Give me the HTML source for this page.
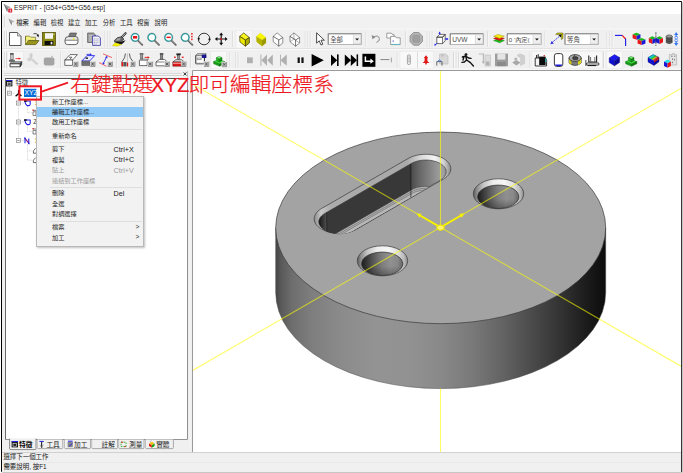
<!DOCTYPE html>
<html lang="zh-Hant">
<head>
<meta charset="utf-8">
<title>ESPRIT - [G54+G55+G56.esp]</title>
<style>
html,body{margin:0;padding:0;}
body{width:683px;height:473px;background:#fff;position:relative;overflow:hidden;
 font-family:"Liberation Sans","Noto Sans CJK TC",sans-serif;color:#000;}
.abs{position:absolute;}
#frame{position:absolute;left:1px;top:1px;width:679px;height:469px;border:1px solid #000;border-right-color:#333;border-bottom-color:#333;border-radius:1px;box-shadow:1px 1px 0 #c6c6c6;background:#fff;overflow:hidden;}
#win{position:absolute;left:0;top:0;width:683px;height:473px;}
.t{position:absolute;white-space:nowrap;line-height:1;}
#title{left:13.8px;top:4.2px;font-size:7.7px;color:#222;transform-origin:0 0;transform:scaleX(0.86);}
#menubar{left:2px;top:14px;width:679px;height:15px;background:#f1f1f1;}
.mi{position:absolute;top:19.6px;font-size:6.3px;color:#222;white-space:nowrap;line-height:1;}
#tb{left:2px;top:29px;width:679px;height:42px;background:#f0f0f0;}
#panelbg{left:2px;top:71px;width:191px;height:382px;background:#f0f0f0;}
#tree{left:5px;top:78px;width:181.4px;height:359.6px;background:#fff;border:1px solid #6a6a6a;border-top-color:#505050;}
#status{left:2px;top:452px;width:679px;height:19px;background:#f0f0f0;border-top:1px solid #d0d0d0;}
.st{position:absolute;left:3.4px;font-size:6.45px;color:#222;white-space:nowrap;line-height:1;}
#ctx{left:36px;top:95.6px;width:106.4px;height:149.4px;background:#f2f2f2;border:0.8px solid #b8b8b8;box-shadow:1px 1px 2px rgba(0,0,0,.25);}
.cm{position:absolute;left:15px;font-size:6.2px;color:#262626;white-space:nowrap;line-height:1;}
.cm.d{color:#9a9a9a;}
.sc{position:absolute;left:76.6px;font-size:7.2px;color:#1a1a1a;white-space:nowrap;line-height:1;}
.sc.d{color:#9a9a9a;}
.sep{position:absolute;left:13.4px;width:92px;height:0;border-top:0.8px solid #dedede;}
.tab{position:absolute;top:439px;height:10px;font-size:6.8px;line-height:10px;color:#222;white-space:nowrap;}
.note{top:75.3px;font-size:20.8px;color:#ee1620;font-weight:300;-webkit-text-stroke:0.22px #ee1620;}
</style>
</head>
<body>
<div id="frame"></div>
<div id="win">
<!-- title -->
<svg class="abs" style="left:3px;top:3px" width="11" height="11" viewBox="0 0 11 11">
 <path d="M0.6 0.8 L7.8 4.2 L4.9 5.6 L4.2 9 Z" fill="#a8a8a8"/>
 <path d="M0.6 0.8 L4.9 5.6 L4.2 9 Z" fill="#7a7a7a"/>
 <rect x="5.2" y="5.6" width="4" height="4" rx="0.6" fill="#d8283c"/>
 <rect x="6.9" y="6.6" width="0.8" height="2" fill="#fff"/>
</svg>
<div class="t" id="title">ESPRIT - [G54+G55+G56.esp]</div>

<!-- menubar -->
<div class="abs" id="menubar"></div>
<svg class="abs" style="left:7.6px;top:18.4px" width="8" height="8" viewBox="0 0 8 8">
 <path d="M0.5 0.6 L6.6 3.4 L4 4.4 L3.4 7.2 Z" fill="#b4b4b4"/>
 <path d="M0.5 0.6 L4 4.4 L3.4 7.2 Z" fill="#8a8a8a"/>
</svg>
<div class="mi" style="left:16.2px">檔案</div>
<div class="mi" style="left:33.6px">編輯</div>
<div class="mi" style="left:50.8px">檢視</div>
<div class="mi" style="left:67.9px">建立</div>
<div class="mi" style="left:85px">加工</div>
<div class="mi" style="left:102.7px">分析</div>
<div class="mi" style="left:119.9px">工具</div>
<div class="mi" style="left:136.9px">視窗</div>
<div class="mi" style="left:154.6px">說明</div>

<!-- toolbars -->
<div class="abs" id="tb"></div>
<svg class="abs" style="left:0;top:0" width="683" height="473" viewBox="0 0 683 473">
<rect x="2" y="28.6" width="679" height="0.8" fill="#fbfbfb"/>
<rect x="2" y="49" width="679" height="0.9" fill="#fafafa"/>
<rect x="2" y="48.2" width="679" height="0.8" fill="#e0e0e0"/>
<rect x="2" y="68.6" width="679" height="0.9" fill="#fcfcfc"/>
<rect x="4.4" y="16.4" width="0.8" height="10.6" fill="#cdcdcd"/><rect x="5.2" y="16.4" width="0.7" height="10.6" fill="#fcfcfc"/>
<rect x="4" y="31" width="0.8" height="16" fill="#cfcfcf"/><rect x="4.8" y="31" width="0.7" height="16" fill="#fdfdfd"/>
<rect x="6.2" y="31" width="0.8" height="16" fill="#cfcfcf"/><rect x="7" y="31" width="0.7" height="16" fill="#fdfdfd"/>
<g transform="translate(9 32)"><path d="M0.5 0.5 H8.5 L12 4 V13.5 H0.5 Z" fill="#fff" stroke="#444" stroke-width="0.9"/><path d="M8.5 0.5 V4 H12" fill="#e0e0e0" stroke="#666" stroke-width="0.7"/></g>
<g transform="translate(25 32)"><path d="M0.5 4.2 H4.6 L5.6 5.2 H10.6 V8.4 H0.5 Z" fill="#f6f282" stroke="#6a681a" stroke-width="0.7"/><path d="M0.5 12.6 L0.5 8 L3 8.4 H13.8 L10.6 12.6 Z" fill="#f6f282" stroke="none"/><path d="M0.5 12.6 L3.6 8.6 H14 L10.8 12.6 Z" fill="#9a961c" stroke="#4a4a10" stroke-width="0.7"/><path d="M0.5 4.2 V12.6" stroke="#6a681a" stroke-width="0.7"/><path d="M8.5 1.8 Q11.5 0.5 13 3.2" fill="none" stroke="#222" stroke-width="0.8"/><path d="M11.5 3 L14 2.6 L13.4 5.4 Z" fill="#111"/></g>
<g transform="translate(42 32)"><rect x="0.5" y="0.5" width="13" height="13" fill="#8a8612" stroke="#55520c" stroke-width="0.8"/><rect x="3" y="1.2" width="8" height="5.6" fill="#f4f4f4"/><rect x="2.6" y="9" width="8.8" height="4" fill="#0c0c0c"/><rect x="8.6" y="9.8" width="1.8" height="2.6" fill="#e8e8e8"/><rect x="11.3" y="1.6" width="1.2" height="1.4" fill="#d8d6a0"/></g>
<rect x="59.6" y="31" width="0.8" height="16" fill="#d4d4d4"/><rect x="60.4" y="31" width="0.7" height="16" fill="#fbfbfb"/>
<g transform="translate(64 32)"><path d="M4.5 4.5 L6 1 H12.5 L11.4 4.5 Z" fill="#7a7a7a" stroke="#444" stroke-width="0.6"/><path d="M1 8 Q1 4.6 4.5 4.6 H11.5 Q14 4.6 14 7 V10 Q14 12.6 11 12.6 H3.5 Q1 12.6 1 10 Z" fill="#e8e8e8" stroke="#444" stroke-width="0.8"/><path d="M1.4 8.2 H13.6" stroke="#555" stroke-width="0.7"/><rect x="8.8" y="6.3" width="1.6" height="1.4" fill="#f0e800"/><path d="M2 9 H12.5 V11 Q12 12 10.5 12 H4 Q2 12 2 10.6Z" fill="#fff"/></g>
<rect x="82.6" y="31" width="0.8" height="16" fill="#d4d4d4"/><rect x="83.4" y="31" width="0.7" height="16" fill="#fbfbfb"/>
<g transform="translate(87 32)"><path d="M0.6 1 H6.5 L8.4 2.8 V10.5 H0.6 Z" fill="#9c9c9c" stroke="#555" stroke-width="0.7"/><path d="M1.8 3.4 H7 M1.8 5.2 H7 M1.8 7 H5 M1.8 8.8 H5" stroke="#d8d8d8" stroke-width="0.7"/><path d="M5.6 4 H11.4 L13.4 6 V13.4 H5.6 Z" fill="#f2f2fa" stroke="#2c2ca0" stroke-width="0.8"/><path d="M6.8 7 H12.2 M6.8 8.8 H12.2 M6.8 10.6 H12.2 M6.8 12 H10" stroke="#8c8cb4" stroke-width="0.7" stroke-dasharray="1.2 0.5"/></g>
<rect x="104.6" y="31" width="0.8" height="16" fill="#d4d4d4"/><rect x="105.4" y="31" width="0.7" height="16" fill="#fbfbfb"/>
<rect x="107.6" y="31" width="0.8" height="16" fill="#cfcfcf"/><rect x="108.39999999999999" y="31" width="0.7" height="16" fill="#fdfdfd"/>
<rect x="109.8" y="31" width="0.8" height="16" fill="#cfcfcf"/><rect x="110.6" y="31" width="0.7" height="16" fill="#fdfdfd"/>
<g transform="translate(112 32)"><path d="M13.6 1.2 L9 6" stroke="#3a3a3a" stroke-width="2.2" stroke-linecap="round"/><path d="M13.4 1.4 L9.2 5.8" stroke="#b0b0b0" stroke-width="1"/><path d="M5.6 5.6 L9.6 4.8 L12 7.2 L8.6 9.8 L2.6 10 L2.4 8.4 Z" fill="#6a6a6a" stroke="#1a1a1a" stroke-width="0.6" stroke-linejoin="round"/><path d="M5.4 6.4 L8.8 5.8 L7.4 8.6 L3.4 8.8 Z" fill="#a4a4a4"/><path d="M2.6 10 L8.6 9.8 L13.6 8.2 L11.6 10.8 L9.2 12.4 L5.4 11.4 Z" fill="#161616"/><path d="M0.4 13.8 L3 10.8 L6 11.6 L9.6 12.6 L5.4 14.2 Z" fill="#f4f000" stroke="#a09c00" stroke-width="0.3"/></g>
<g transform="translate(130.5 32)"><circle cx="4.6" cy="5.4" r="3.7" fill="#fff" stroke="#28a8ac" stroke-width="1.2"/><circle cx="4.6" cy="5.4" r="4.3" fill="none" stroke="#3a3a3a" stroke-width="0.3"/><rect x="2.5" y="4" width="4.2" height="2.6" fill="#e8141c"/><path d="M7.8 8.8 L11.8 12.8" stroke="#606060" stroke-width="1.8" stroke-linecap="round"/><path d="M8 8.6 L11.6 12.2" stroke="#c0c0c0" stroke-width="0.6"/></g>
<g transform="translate(147.2 32)"><circle cx="4.6" cy="5.4" r="3.7" fill="#fff" stroke="#28a8ac" stroke-width="1.2"/><circle cx="4.6" cy="5.4" r="4.3" fill="none" stroke="#3a3a3a" stroke-width="0.3"/><path d="M7.8 8.8 L11.8 12.8" stroke="#606060" stroke-width="1.8" stroke-linecap="round"/><path d="M8 8.6 L11.6 12.2" stroke="#c0c0c0" stroke-width="0.6"/></g>
<g transform="translate(164 32)"><circle cx="4.6" cy="5.4" r="3.7" fill="#fff" stroke="#28a8ac" stroke-width="1.2"/><circle cx="4.6" cy="5.4" r="4.3" fill="none" stroke="#3a3a3a" stroke-width="0.3"/><rect x="2.5" y="4.6" width="4.2" height="1.5" fill="#e8141c"/><path d="M7.8 8.8 L11.8 12.8" stroke="#606060" stroke-width="1.8" stroke-linecap="round"/><path d="M8 8.6 L11.6 12.2" stroke="#c0c0c0" stroke-width="0.6"/></g>
<g transform="translate(180.6 32)"><circle cx="4.6" cy="5.4" r="3.7" fill="#fff" stroke="#28a8ac" stroke-width="1.2"/><circle cx="4.6" cy="5.4" r="4.3" fill="none" stroke="#3a3a3a" stroke-width="0.3"/><rect x="10.6" y="1" width="1.4" height="1.6" fill="#e8141c"/><rect x="10.6" y="3.8" width="1.4" height="1.6" fill="#e8141c"/><rect x="10.6" y="6.6" width="1.4" height="1.6" fill="#e8141c"/><path d="M7.8 8.8 L11.8 12.8" stroke="#606060" stroke-width="1.8" stroke-linecap="round"/><path d="M8 8.6 L11.6 12.2" stroke="#c0c0c0" stroke-width="0.6"/></g>
<g transform="translate(197.5 32)"><circle cx="6.6" cy="7" r="5.8" fill="none" stroke="#222" stroke-width="0.9"/><path d="M0 6.2 L1.6 8.6 L2.4 5.8 Z M13.2 7.8 L11.6 5.4 L10.8 8.2 Z" fill="#111"/></g>
<g transform="translate(215 32)"><path d="M6.2 2 V12 M1.2 7 H11.2" stroke="#111" stroke-width="1.2"/><path d="M6.2 0.6 L8.2 3.2 H4.2 Z M6.2 13.4 L8.2 10.8 H4.2 Z M-0.2 7 L2.4 5 V9 Z M12.6 7 L10 5 V9 Z" fill="#111"/><rect x="5.4" y="6.2" width="1.6" height="1.6" fill="#e8141c"/></g>
<rect x="232.0" y="31" width="0.8" height="16" fill="#d4d4d4"/><rect x="232.8" y="31" width="0.7" height="16" fill="#fbfbfb"/>
<rect x="236" y="30.5" width="16" height="17.6" fill="#f8f8f8" stroke="#e6e6e6" stroke-width="0.5"/>
<g transform="translate(239.4 32)"><path d="M4.3 0.9 L10 5.6 L6 8 L0.3 4.4 Z" fill="#f8f420" stroke="#3c3a00" stroke-width="0.7" stroke-linejoin="round"/><path d="M0.3 4.4 L6 8 V14.2 L0.5 9.8 Z" fill="#eeea00" stroke="#3c3a00" stroke-width="0.7" stroke-linejoin="round"/><path d="M10 5.6 L6 8 V14.2 L10 11 Z" fill="#b0ac00" stroke="#3c3a00" stroke-width="0.7" stroke-linejoin="round"/></g>
<g transform="translate(256 32)"><path d="M4.3 0.9 L10 5.6 L6 8 L0.3 4.4 Z" fill="#faf600" stroke="#c8c400" stroke-width="0.2" stroke-linejoin="round"/><path d="M0.3 4.4 L6 8 V14.2 L0.5 9.8 Z" fill="#b4b000" stroke="#c8c400" stroke-width="0.2" stroke-linejoin="round"/><path d="M10 5.6 L6 8 V14.2 L10 11 Z" fill="#9c9800" stroke="#c8c400" stroke-width="0.2" stroke-linejoin="round"/></g>
<g transform="translate(272.8 32)"><path d="M4.3 0.9 L10 5.6 L6 8 L0.3 4.4 Z" fill="#fff" stroke="#3a3a3a" stroke-width="0.55" stroke-linejoin="round"/><path d="M0.3 4.4 L6 8 V14.2 L0.5 9.8 Z" fill="#fff" stroke="#3a3a3a" stroke-width="0.55" stroke-linejoin="round"/><path d="M10 5.6 L6 8 V14.2 L10 11 Z" fill="#fff" stroke="#3a3a3a" stroke-width="0.55" stroke-linejoin="round"/></g>
<g transform="translate(289.6 32)"><path d="M4.3 0.9 L10 5.6 L6 8 L0.3 4.4 Z" fill="#fff" stroke="#3a3a3a" stroke-width="0.55" stroke-linejoin="round"/><path d="M0.3 4.4 L6 8 V14.2 L0.5 9.8 Z" fill="#fff" stroke="#3a3a3a" stroke-width="0.55" stroke-linejoin="round"/><path d="M10 5.6 L6 8 V14.2 L10 11 Z" fill="#fff" stroke="#3a3a3a" stroke-width="0.55" stroke-linejoin="round"/><path d="M4.3 0.9 V7 L0.5 9.8 M4.3 7 L10 11" fill="none" stroke="#555" stroke-width="0.45"/></g>
<rect x="304.8" y="31" width="0.8" height="16" fill="#d4d4d4"/><rect x="305.59999999999997" y="31" width="0.7" height="16" fill="#fbfbfb"/>
<rect x="307.6" y="31" width="0.8" height="16" fill="#cfcfcf"/><rect x="308.40000000000003" y="31" width="0.7" height="16" fill="#fdfdfd"/>
<rect x="309.8" y="31" width="0.8" height="16" fill="#cfcfcf"/><rect x="310.6" y="31" width="0.7" height="16" fill="#fdfdfd"/>
<g transform="translate(316 32)"><path d="M0.6 0.8 V11.2 L3.2 8.8 L5 13 L6.8 12.2 L5 8.2 H8.4 Z" fill="#fff" stroke="#222" stroke-width="0.8" stroke-linejoin="round"/></g>
<rect x="328.2" y="33.8" width="33.19999999999999" height="10.800000000000004" fill="#fff" stroke="#9a9a9a" stroke-width="0.7"/>
<path d="M328.2 44.6 V33.8 H361.4" fill="none" stroke="#6a6a6a" stroke-width="0.7"/>
<rect x="353.2" y="34.599999999999994" width="7.6" height="9.200000000000005" fill="#efefef" stroke="#c8c8c8" stroke-width="0.5"/>
<path d="M355.2 38.4 H359.0 L357.09999999999997 40.599999999999994 Z" fill="#111"/>
<text x="330.2" y="41.699999999999996" font-size="6.4" fill="#4a4a4a" font-family="Liberation Sans, Noto Sans CJK TC, sans-serif">全部</text>
<rect x="365.6" y="31" width="0.8" height="16" fill="#d4d4d4"/><rect x="366.4" y="31" width="0.7" height="16" fill="#fbfbfb"/>
<g transform="translate(371 32)"><path d="M2 5.4 Q7.6 2.2 8.4 6.6 Q8.6 9.6 5.4 10.4" fill="none" stroke="#8a8a8a" stroke-width="1"/><path d="M0.6 3 L1.4 7.2 L4.6 5 Z" fill="#8a8a8a"/></g>
<g transform="translate(386 32)"><path d="M0.8 1.2 H5.6 L6.4 2.6 H8 V6 H0.8 Z" fill="#fff" stroke="#777" stroke-width="0.7"/><path d="M4.6 4.4 H9.6 L10.4 5.8 H14.2 V12.6 H4.6 Z" fill="#fff" stroke="#777" stroke-width="0.7"/><path d="M5.2 12.4 H14" stroke="#4cc0c8" stroke-width="0.8"/><rect x="6.6" y="8.6" width="1.2" height="1" fill="#3030d0"/></g>
<rect x="405.0" y="31" width="0.8" height="16" fill="#d4d4d4"/><rect x="405.79999999999995" y="31" width="0.7" height="16" fill="#fbfbfb"/>
<g transform="translate(409.6 32)"><path d="M4 0.5 H9.2 L12.8 4 V9.6 L9.2 13.2 H4 L0.5 9.6 V4 Z" fill="#b4b4b4" stroke="#8c8c8c" stroke-width="0.9"/><rect x="3.2" y="3.4" width="6.8" height="6.8" rx="1.2" fill="#a0a0a0" stroke="#8a8a8a" stroke-width="0.5"/></g>
<rect x="426.8" y="31" width="0.8" height="16" fill="#d4d4d4"/><rect x="427.59999999999997" y="31" width="0.7" height="16" fill="#fbfbfb"/>
<rect x="429.6" y="31" width="0.8" height="16" fill="#cfcfcf"/><rect x="430.40000000000003" y="31" width="0.7" height="16" fill="#fdfdfd"/>
<rect x="431.8" y="31" width="0.8" height="16" fill="#cfcfcf"/><rect x="432.6" y="31" width="0.7" height="16" fill="#fdfdfd"/>
<g transform="translate(434.2 32)"><path d="M2.6 5.2 L5.6 2.4 H11 L8.4 5.2 Z M2.6 5.2 H8.4 V11.6 H2.6 Z M8.4 5.2 L11 2.4 V8.8 L8.4 11.6" fill="#fff" stroke="#333" stroke-width="0.7" stroke-linejoin="round"/><path d="M5.4 2.6 V0.6 M10.6 7 H13.6 M3 11 L0.8 13" stroke="#2020e8" stroke-width="0.9"/><path d="M5.4 -0.6 L6.6 1.8 H4.2 Z M14.4 7 L12.2 5.8 V8.2 Z M0 13.8 L0.6 11.4 L2.4 13 Z" fill="#2020e8"/></g>
<rect x="450.2" y="33.8" width="33.19999999999999" height="10.800000000000004" fill="#fff" stroke="#9a9a9a" stroke-width="0.7"/>
<path d="M450.2 44.6 V33.8 H483.4" fill="none" stroke="#6a6a6a" stroke-width="0.7"/>
<rect x="475.2" y="34.599999999999994" width="7.6" height="9.200000000000005" fill="#efefef" stroke="#c8c8c8" stroke-width="0.5"/>
<path d="M477.2 38.4 H481.0 L479.09999999999997 40.599999999999994 Z" fill="#111"/>
<text x="452.2" y="41.699999999999996" font-size="6.6" fill="#4a4a4a" font-family="Liberation Sans, Noto Sans CJK TC, sans-serif">UVW</text>
<rect x="487.0" y="31" width="0.8" height="16" fill="#d4d4d4"/><rect x="487.79999999999995" y="31" width="0.7" height="16" fill="#fbfbfb"/>
<g transform="translate(493 32)"><path d="M0.6 8.6 L5 6.8 L11.4 8.6 L6.6 10.8 Z" fill="#18c018" stroke="#0a7a0a" stroke-width="0.4"/><path d="M0.6 6.4 L5 4.6 L11.4 6.4 L6.6 8.6 Z" fill="#e81818" stroke="#8a0a0a" stroke-width="0.4"/><path d="M0.6 4.2 L5 2.4 L11.4 4.2 L6.6 6.4 Z" fill="#f4ec10" stroke="#8a8400" stroke-width="0.4"/></g>
<rect x="507.2" y="33.8" width="34.00000000000006" height="10.800000000000004" fill="#fff" stroke="#9a9a9a" stroke-width="0.7"/>
<path d="M507.2 44.6 V33.8 H541.2" fill="none" stroke="#6a6a6a" stroke-width="0.7"/>
<rect x="533.0" y="34.599999999999994" width="7.6" height="9.200000000000005" fill="#efefef" stroke="#c8c8c8" stroke-width="0.5"/>
<path d="M535.0 38.4 H538.8 L536.9 40.599999999999994 Z" fill="#111"/>
<text x="508.8" y="41.699999999999996" font-size="6.2" fill="#4a4a4a" font-family="Liberation Sans, Noto Sans CJK TC, sans-serif">0 '內定(</text>
<rect x="544.6" y="31" width="0.8" height="16" fill="#d4d4d4"/><rect x="545.4" y="31" width="0.7" height="16" fill="#fbfbfb"/>
<g transform="translate(550 32)"><path d="M7 1 H13 V6.4 L11.4 7.6 V2.6 H5.8 Z" fill="#c8c400" stroke="#55520c" stroke-width="0.5"/><path d="M11 3 L2 10.6" stroke="#2828e0" stroke-width="0.9" stroke-dasharray="1.6 0.8"/><path d="M0.4 12.2 L1.6 9 L3.8 11.4 Z" fill="#2828e0"/><path d="M11.6 2.4 L8.4 3 L10.8 5.4 Z" fill="#111"/></g>
<rect x="565" y="33.8" width="33.39999999999998" height="10.800000000000004" fill="#fff" stroke="#9a9a9a" stroke-width="0.7"/>
<path d="M565 44.6 V33.8 H598.4" fill="none" stroke="#6a6a6a" stroke-width="0.7"/>
<rect x="590.1999999999999" y="34.599999999999994" width="7.6" height="9.200000000000005" fill="#efefef" stroke="#c8c8c8" stroke-width="0.5"/>
<path d="M592.1999999999999 38.4 H595.9999999999999 L594.0999999999999 40.599999999999994 Z" fill="#111"/>
<text x="567" y="41.699999999999996" font-size="6.4" fill="#4a4a4a" font-family="Liberation Sans, Noto Sans CJK TC, sans-serif">等角</text>
<rect x="606.6" y="31" width="0.8" height="16" fill="#d4d4d4"/><rect x="607.4" y="31" width="0.7" height="16" fill="#fbfbfb"/>
<rect x="609.6" y="31" width="0.8" height="16" fill="#cfcfcf"/><rect x="610.4" y="31" width="0.7" height="16" fill="#fdfdfd"/>
<rect x="611.8000000000001" y="31" width="0.8" height="16" fill="#cfcfcf"/><rect x="612.6" y="31" width="0.7" height="16" fill="#fdfdfd"/>
<g transform="translate(614.4 32)"><path d="M0.6 3.4 H8.2" stroke="#1818e8" stroke-width="1.1"/><path d="M7.8 3.4 L11.2 7" fill="none" stroke="#e81818" stroke-width="1.2"/><path d="M11.2 6.6 V14" stroke="#1818e8" stroke-width="1.1"/></g>
<g transform="translate(632.6 32)"><g transform="translate(0 0.8) scale(1.45 1.1)"><path d="M0 1.4 L2.6 0 L5.4 1.4 L2.8 2.8 Z" fill="#18b818"/><path d="M0 1.4 L2.8 2.8 V6.4 L0 5 Z" fill="#e81818"/><path d="M5.4 1.4 L2.8 2.8 V6.4 L5.4 5 Z" fill="#1818d8"/></g><g transform="translate(5 6) scale(1.45 1.1)"><path d="M0 1.4 L2.6 0 L5.4 1.4 L2.8 2.8 Z" fill="#18b818"/><path d="M0 1.4 L2.8 2.8 V6.4 L0 5 Z" fill="#e81818"/><path d="M5.4 1.4 L2.8 2.8 V6.4 L5.4 5 Z" fill="#1818d8"/></g></g>
<g transform="translate(648.8 32)"><g transform="translate(0 4.2) scale(1.3 1.2)"><path d="M0 1.4 L2.6 0 L5.4 1.4 L2.8 2.8 Z" fill="#18b818"/><path d="M0 1.4 L2.8 2.8 V6.4 L0 5 Z" fill="#e81818"/><path d="M5.4 1.4 L2.8 2.8 V6.4 L5.4 5 Z" fill="#1818d8"/></g><g transform="translate(7.2 4.2) scale(1.3 1.2)"><path d="M0 1.4 L2.6 0 L5.4 1.4 L2.8 2.8 Z" fill="#18b818"/><path d="M0 1.4 L2.8 2.8 V6.4 L0 5 Z" fill="#1818d8"/><path d="M5.4 1.4 L2.8 2.8 V6.4 L5.4 5 Z" fill="#e81818"/></g><path d="M7.1 0.2 V14" stroke="#222" stroke-width="0.7" stroke-dasharray="2.4 0.8"/></g>
<g transform="translate(665.6 32)"><path d="M0.6 4.4 V10.6 Q3.6 12.8 6.6 10.6 V4.4 Z" fill="#5a5a5a" stroke="#222" stroke-width="0.5"/><ellipse cx="3.6" cy="4.4" rx="3" ry="1.5" fill="#9a9a9a" stroke="#222" stroke-width="0.5"/><path d="M0.8 6.6 Q3.6 8.4 6.4 6.6 M0.8 8.6 Q3.6 10.4 6.4 8.6" fill="none" stroke="#222" stroke-width="0.4"/><path d="M10.6 0.8 V5 M10.6 9 V13.2" stroke="#3a78f0" stroke-width="1.1"/><path d="M8.4 3 L10.6 0.2 L12.8 3 Z M8.4 11 L10.6 13.8 L12.8 11 Z" fill="#3a78f0"/><circle cx="10.6" cy="5.6" r="1.4" fill="none" stroke="#3a78f0" stroke-width="0.7"/><circle cx="10.6" cy="8.6" r="1.4" fill="none" stroke="#3a78f0" stroke-width="0.7"/></g>
<rect x="4" y="52" width="0.8" height="16" fill="#cfcfcf"/><rect x="4.8" y="52" width="0.7" height="16" fill="#fdfdfd"/>
<rect x="6.2" y="52" width="0.8" height="16" fill="#cfcfcf"/><rect x="7" y="52" width="0.7" height="16" fill="#fdfdfd"/>
<rect x="7.2" y="51.2" width="16.0" height="17.6" fill="#f8f8f8" stroke="#e6e6e6" stroke-width="0.5"/>
<g transform="translate(9 53)"><rect x="1.6" y="0.6" width="2.6" height="6" fill="#c4c4c4" stroke="#555" stroke-width="0.5"/><rect x="1.4" y="0.4" width="3" height="1.2" fill="#333"/><path d="M0.4 7 H5.4 V8.4 H0.4 Z" fill="#8a8a8a" stroke="#222" stroke-width="0.5"/><path d="M1 10.8 L2.4 8.6 H12.8 L11.2 10.8 Z" fill="#a0a0a0" stroke="#333" stroke-width="0.4"/><path d="M1 10.8 H11.2 V13.8 H1 Z" fill="#fff" stroke="#1a1a1a" stroke-width="0.8"/><path d="M11.2 10.8 L12.8 8.6 V11.8 L11.2 13.8 Z" fill="#444" stroke="#1a1a1a" stroke-width="0.5"/><path d="M6.4 5.6 H10" stroke="#f02020" stroke-width="0.8"/><path d="M12 5.6 L9.6 4.4 V6.8 Z" fill="#f02020"/></g>
<g transform="translate(26 53)"><path d="M3.6 0.4 H6.4 V4 L5 5.2 L3.6 4 Z" fill="#c6c6c6"/><path d="M4.6 0.6 V4" stroke="#e8e8e8" stroke-width="0.6"/><path d="M3.2 4.2 L0.6 6.6 L3 8.6 L5.4 7.4 L10.4 12 L12.6 10.8 L6.6 5.6 Z" fill="#d2d2d2"/></g>
<g transform="translate(43 53)"><rect x="0.8" y="4.4" width="10.6" height="8" rx="2" fill="#a4a4a4"/><path d="M7.6 4.4 L9 2.6 L10.4 4.4" fill="#b8b8b8"/></g>
<rect x="60.0" y="52" width="0.8" height="16" fill="#d4d4d4"/><rect x="60.8" y="52" width="0.7" height="16" fill="#fbfbfb"/>
<g transform="translate(64 53)"><path d="M0.8 7 L6 1.6 H13.4 L8.6 7 Z" fill="#fff" stroke="#333" stroke-width="0.7" stroke-linejoin="round"/><path d="M0.8 7 H8.6 V12.4 H0.8 Z" fill="#fff" stroke="#333" stroke-width="0.7"/><path d="M5 4.2 H8 L7 5.4 H6" fill="none" stroke="#333" stroke-width="0.7"/><rect x="9.2" y="8.6" width="4.8" height="4.8" fill="#b8b8b8" stroke="#e8e8e8" stroke-width="0.5"/><path d="M10.4 9.8 L12.8 12.2 M12.8 9.8 L10.4 12.2" stroke="#333" stroke-width="0.7"/><path d="M9.2 13.4 H14 V8.6" fill="none" stroke="#555" stroke-width="0.5"/></g>
<g transform="translate(81 53)"><path d="M0.8 8 L6 2.6 H13.6 L8.6 8 Z" fill="#e8ecff" stroke="#2828e8" stroke-width="0.9" stroke-linejoin="round"/><path d="M0.8 8.2 H9 V12.6 H0.8 Z" fill="#7c7c7c" stroke="#444" stroke-width="0.5"/><path d="M0.8 9.6 H9 M0.8 11 H9" stroke="#5a5a5a" stroke-width="0.5"/><path d="M5.4 1.4 H9.6" stroke="#2828e8" stroke-width="0.8"/><path d="M11 1.4 L8.8 0.2 V2.6 Z" fill="#2828e8"/><rect x="4.6" y="4.4" width="2.4" height="1.6" fill="#333"/><rect x="9.2" y="8.6" width="4.8" height="4.8" fill="#b8b8b8" stroke="#e8e8e8" stroke-width="0.5"/><path d="M10.4 9.8 L12.8 12.2 M12.8 9.8 L10.4 12.2" stroke="#333" stroke-width="0.7"/><path d="M9.2 13.4 H14 V8.6" fill="none" stroke="#555" stroke-width="0.5"/></g>
<g transform="translate(98.4 53)"><path d="M4.6 0.8 L13.6 4.6 M0.6 9.6 L8 13.2" stroke="#f04040" stroke-width="0.8"/><path d="M8.2 3.8 L5 10.4" stroke="#2828e8" stroke-width="0.9"/><path d="M8.8 2.6 L6.8 4.6 L9 5.4 Z M4.4 11.8 L4.2 9.2 L6.4 10.2 Z" fill="#2828e8"/><rect x="9.2" y="8.6" width="4.8" height="4.8" fill="#b8b8b8" stroke="#e8e8e8" stroke-width="0.5"/><path d="M10.4 9.8 L12.8 12.2 M12.8 9.8 L10.4 12.2" stroke="#333" stroke-width="0.7"/><path d="M9.2 13.4 H14 V8.6" fill="none" stroke="#555" stroke-width="0.5"/></g>
<rect x="116.39999999999999" y="52" width="0.8" height="16" fill="#d4d4d4"/><rect x="117.2" y="52" width="0.7" height="16" fill="#fbfbfb"/>
<g transform="translate(121 53)"><path d="M4.4 0.6 Q4.4 5 1 8.6 V13.2 M8.4 0.6 Q8.4 5 12 8.6" fill="none" stroke="#333" stroke-width="0.8"/><path d="M6.4 0.4 V13.4" stroke="#9a9a9a" stroke-width="0.5"/><rect x="0.6" y="9" width="1.6" height="4.4" fill="#e81818"/><rect x="5.8" y="9.6" width="1.4" height="3.8" fill="#e81818"/><rect x="2.4" y="9" width="3" height="4.4" fill="#555"/><rect x="9.2" y="8.6" width="4.8" height="4.8" fill="#b8b8b8" stroke="#e8e8e8" stroke-width="0.5"/><path d="M10.4 9.8 L12.8 12.2 M12.8 9.8 L10.4 12.2" stroke="#333" stroke-width="0.7"/><path d="M9.2 13.4 H14 V8.6" fill="none" stroke="#555" stroke-width="0.5"/></g>
<g transform="translate(138.6 53)"><rect x="2" y="0.6" width="2.2" height="5.6" fill="#9a9a9a" stroke="#444" stroke-width="0.5"/><path d="M0.6 1 H5.6" stroke="#555" stroke-width="0.6"/><path d="M0.8 7.4 H8.6 V12.6 H0.8 Z" fill="#fff" stroke="#333" stroke-width="0.7"/><path d="M0.8 7.4 L2 6.2 H10 L8.6 7.4" fill="#ccc" stroke="#333" stroke-width="0.5"/><path d="M6 4.4 H9.6" stroke="#e81818" stroke-width="0.9"/><path d="M11.2 4.4 L9 3.2 V5.6 Z" fill="#e81818"/><rect x="9.2" y="8.6" width="4.8" height="4.8" fill="#b8b8b8" stroke="#e8e8e8" stroke-width="0.5"/><path d="M10.4 9.8 L12.8 12.2 M12.8 9.8 L10.4 12.2" stroke="#333" stroke-width="0.7"/><path d="M9.2 13.4 H14 V8.6" fill="none" stroke="#555" stroke-width="0.5"/></g>
<g transform="translate(155.4 53)"><rect x="5" y="0.4" width="2.4" height="6.6" fill="#8a8a8a" stroke="#333" stroke-width="0.5"/><rect x="4.4" y="0.4" width="3.6" height="1.4" fill="#555"/><path d="M0.6 9 L4 6.4 H9 L12 9 V12.8 H0.6 Z" fill="#fff" stroke="#333" stroke-width="0.7" stroke-linejoin="round"/><path d="M0.6 9 H12" stroke="#333" stroke-width="0.6"/><rect x="9.2" y="8.6" width="4.8" height="4.8" fill="#b8b8b8" stroke="#e8e8e8" stroke-width="0.5"/><path d="M10.4 9.8 L12.8 12.2 M12.8 9.8 L10.4 12.2" stroke="#333" stroke-width="0.7"/><path d="M9.2 13.4 H14 V8.6" fill="none" stroke="#555" stroke-width="0.5"/></g>
<g transform="translate(172 53)"><rect x="4.4" y="0.4" width="4.4" height="1.8" fill="#222"/><rect x="5.6" y="2.2" width="2" height="4.4" fill="#9a9a9a" stroke="#333" stroke-width="0.5"/><path d="M0.8 9 L3.8 6.6 H9.6 L12.4 9 Z" fill="#d8d8d8" stroke="#333" stroke-width="0.6" stroke-linejoin="round"/><path d="M0.8 9 H12.4 V13.2 H0.8 Z" fill="#e01818" stroke="#5a0a0a" stroke-width="0.5"/><path d="M1 10.2 H9" stroke="#fff" stroke-width="0.7"/><rect x="2" y="3.6" width="1.8" height="1.3" fill="#e81818"/><rect x="9.8" y="3.6" width="1.8" height="1.3" fill="#e81818"/><rect x="9.2" y="8.6" width="4.8" height="4.8" fill="#b8b8b8" stroke="#e8e8e8" stroke-width="0.5"/><path d="M10.4 9.8 L12.8 12.2 M12.8 9.8 L10.4 12.2" stroke="#333" stroke-width="0.7"/><path d="M9.2 13.4 H14 V8.6" fill="none" stroke="#555" stroke-width="0.5"/></g>
<rect x="190.0" y="52" width="0.8" height="16" fill="#d4d4d4"/><rect x="190.8" y="52" width="0.7" height="16" fill="#fbfbfb"/>
<g transform="translate(194.8 53)"><path d="M1 2.6 H9.6 V10.6 H1 Z" fill="#fff" stroke="#222" stroke-width="1"/><path d="M1 2.6 L2.6 0.8 H11.4 L9.6 2.6" fill="#ddd" stroke="#222" stroke-width="0.6"/><rect x="7" y="1.6" width="4.6" height="3.4" fill="#18188c"/><path d="M2.4 5 H6.4 V6.6 H2.4Z" fill="none" stroke="#555" stroke-width="0.6"/><path d="M1 10.6 H9" stroke="#888" stroke-width="1.6"/><rect x="9.2" y="8.6" width="4.8" height="4.8" fill="#b8b8b8" stroke="#e8e8e8" stroke-width="0.5"/><path d="M10.4 9.8 L12.8 12.2 M12.8 9.8 L10.4 12.2" stroke="#333" stroke-width="0.7"/><path d="M9.2 13.4 H14 V8.6" fill="none" stroke="#555" stroke-width="0.5"/></g>
<rect x="210.6" y="51.2" width="15.800000000000011" height="17.6" fill="#f8f8f8" stroke="#e6e6e6" stroke-width="0.5"/>
<g transform="translate(213 53)"><path d="M0.6 8.6 L5.8 6.4 L11.8 8.6 L6.6 11 Z" fill="#3cdc3c" stroke="#0a6a0a" stroke-width="0.4"/><path d="M0.6 8.6 L6.6 11 V13.2 L0.6 10.8Z" fill="#18a018" stroke="#0a6a0a" stroke-width="0.4"/><path d="M11.8 8.6 L6.6 11 V13.2 L11.8 10.8Z" fill="#0c7c0c" stroke="#0a5a0a" stroke-width="0.4"/><path d="M3.4 4.6 L6 3.4 L9 4.6 L6.4 6Z" fill="#7cf47c" stroke="#0a6a0a" stroke-width="0.4"/><path d="M3.4 4.6 L6.4 6 V9 L3.4 7.6Z" fill="#20b820" stroke="#0a6a0a" stroke-width="0.4"/><path d="M9 4.6 L6.4 6 V9 L9 7.6Z" fill="#109010" stroke="#0a5a0a" stroke-width="0.4"/><g transform="translate(-0.4 0.4)"><rect x="9.2" y="8.6" width="4.8" height="4.8" fill="#b8b8b8" stroke="#e8e8e8" stroke-width="0.5"/><path d="M10.4 9.8 L12.8 12.2 M12.8 9.8 L10.4 12.2" stroke="#333" stroke-width="0.7"/><path d="M9.2 13.4 H14 V8.6" fill="none" stroke="#555" stroke-width="0.5"/></g></g>
<rect x="229.6" y="52" width="0.8" height="16" fill="#d4d4d4"/><rect x="230.4" y="52" width="0.7" height="16" fill="#fbfbfb"/>
<rect x="235.6" y="52" width="0.8" height="16" fill="#cfcfcf"/><rect x="236.4" y="52" width="0.7" height="16" fill="#fdfdfd"/>
<rect x="237.79999999999998" y="52" width="0.8" height="16" fill="#cfcfcf"/><rect x="238.6" y="52" width="0.7" height="16" fill="#fdfdfd"/>
<rect x="247" y="57.4" width="5.8" height="5.8" fill="#b0b0b0"/>
<path d="M267 54.6 V65.8 L261.4 60.2 Z M272.8 54.6 V65.8 L267.2 60.2 Z" fill="#b0b0b0"/><rect x="260.4" y="54.6" width="1" height="11.2" fill="#b0b0b0"/>
<path d="M286.8 54.6 V65.8 L280.4 60.2 Z" fill="#b0b0b0"/><rect x="280" y="54.6" width="0.9" height="11.2" fill="#b0b0b0"/>
<rect x="297.6" y="57.4" width="2.2" height="5.6" fill="#111"/><rect x="301.4" y="57.4" width="2.2" height="5.6" fill="#111"/>
<path d="M311.6 54 V66.4 L323.8 60.2 Z" fill="#000"/>
<path d="M331 54.4 V66 L337.2 60.2 Z" fill="#000"/><rect x="337" y="54.4" width="1.6" height="11.6" fill="#000"/>
<path d="M344.8 54.4 V66 L351 60.2 Z M350.8 54.4 V66 L357 60.2 Z" fill="#000"/><rect x="356.6" y="54.4" width="1.5" height="11.6" fill="#000"/>
<rect x="362.4" y="53.8" width="13" height="13" fill="#000"/><path d="M365.4 56.6 V61.2 H371" fill="none" stroke="#fff" stroke-width="1.5"/><path d="M373.8 61.2 L370.4 58.6 V63.8 Z" fill="#fff"/>
<path d="M380.4 59.6 H389.4" stroke="#6a6a6a" stroke-width="0.8"/><path d="M391.4 57.6 V62.4" stroke="#9a9a9a" stroke-width="0.9"/>
<rect x="396.8" y="52" width="0.8" height="16" fill="#d4d4d4"/><rect x="397.59999999999997" y="52" width="0.7" height="16" fill="#fbfbfb"/>
<rect x="400" y="51.2" width="33.60000000000002" height="17.6" fill="#f8f8f8" stroke="#e6e6e6" stroke-width="0.5"/>
<g transform="translate(406.6 53)"><rect x="0.8" y="1.8" width="3" height="9.8" rx="1.4" fill="#f0f0f0" stroke="#7a7a7a" stroke-width="0.6"/><path d="M1 4 H3.6 M1 5.6 H3.6 M1 7.2 H3.6 M1 8.8 H3.6" stroke="#8a8a8a" stroke-width="0.5"/></g>
<rect x="417.20000000000005" y="52" width="0.8" height="16" fill="#d4d4d4"/><rect x="418.0" y="52" width="0.7" height="16" fill="#fbfbfb"/>
<g transform="translate(422 53)"><path d="M4 2.2 L6.2 5 H5.4 V8 L7.4 10 H0.6 L2.6 8 V5 H1.8 Z" fill="#e01818"/><rect x="3.2" y="10" width="1.6" height="1.4" fill="#e01818"/></g>
<g transform="translate(436 53)"><path d="M3.6 1 H9.6 L12 3 V11 H3.6 Z" fill="#d8d8d8" stroke="#b8b8b8" stroke-width="0.6"/><path d="M5 1.2 V3.6 H8 V1.2" fill="#c4c4c4"/><path d="M0.8 12.6 V8.6 H6 V12.6" fill="none" stroke="#555" stroke-width="0.9"/><path d="M1.6 8.4 Q3.4 5.6 5.2 8.4" fill="none" stroke="#3a78f0" stroke-width="1"/></g>
<rect x="453.20000000000005" y="52" width="0.8" height="16" fill="#d4d4d4"/><rect x="454.0" y="52" width="0.7" height="16" fill="#fbfbfb"/>
<rect x="455.8" y="52" width="0.8" height="16" fill="#cfcfcf"/><rect x="456.6" y="52" width="0.7" height="16" fill="#fdfdfd"/>
<rect x="458.0" y="52" width="0.8" height="16" fill="#cfcfcf"/><rect x="458.8" y="52" width="0.7" height="16" fill="#fdfdfd"/>
<g transform="translate(461.4 53)"><circle cx="4.6" cy="1.6" r="1.4" fill="#111"/><path d="M1 4 L4.4 3 L7 5 L9.6 5.4 M4.4 3.4 L5.2 7 L9 9.6 L12 13 M5.2 7 L3 9 L0.6 9.4 M2.4 4.4 L1.6 7" fill="none" stroke="#111" stroke-width="1.4" stroke-linecap="round" stroke-linejoin="round"/></g>
<g transform="translate(478 53)"><path d="M0.8 1 H5.4 V9 " fill="none" stroke="#b8b8b8" stroke-width="1.2"/><path d="M5.4 11 L3.6 8.4 H7.2 Z" fill="#b8b8b8"/><rect x="7" y="2" width="5.4" height="11" fill="#dcdcdc" stroke="#bcbcbc" stroke-width="0.6"/><rect x="8" y="8.6" width="3.4" height="3.8" fill="#b0b0b0"/></g>
<g transform="translate(495 53)"><rect x="0" y="0.6" width="13" height="12.6" fill="#9c9c9c"/><rect x="2.4" y="0.6" width="8" height="6" fill="#e4e4e4"/><rect x="2.2" y="9" width="8.6" height="4.2" fill="#8a8a8a"/></g>
<g transform="translate(511.6 53)"><path d="M5.4 2.6 L8.4 0.8 L13 2.8 V10.4 L9 12.6 V5 Z" fill="#d0d0d0" stroke="#c0c0c0" stroke-width="0.5"/><path d="M0.6 9.4 L4.6 7 L9 9.4 L4.8 12.6 Z" fill="#a8a8a8"/><circle cx="4.2" cy="6" r="1.6" fill="#b8b8b8"/></g>
<rect x="529.6" y="52" width="0.8" height="16" fill="#d4d4d4"/><rect x="530.4" y="52" width="0.7" height="16" fill="#fbfbfb"/>
<rect x="532" y="51.2" width="70.39999999999998" height="17.6" fill="#f8f8f8" stroke="#e6e6e6" stroke-width="0.5"/>
<g transform="translate(534.2 53)"><path d="M1 5 H10 Q12.4 5 12.4 7.4 V13 H1 Z" fill="#f4f4f4" stroke="#222" stroke-width="0.9"/><rect x="5" y="3.6" width="6.4" height="8.4" fill="#0a0a0a"/><path d="M2.4 5 V2 M4 5 V1.2" stroke="#222" stroke-width="1"/><rect x="9.4" y="2" width="1.2" height="1.4" fill="#e81818"/><rect x="11" y="5.4" width="1.2" height="1.4" fill="#18c8c8"/><rect x="11" y="7.6" width="1.2" height="1.4" fill="#18c8c8"/></g>
<g transform="translate(553.6 53)"><rect x="0.8" y="0.6" width="8.4" height="12.8" rx="2.2" fill="#fff" stroke="#222" stroke-width="0.9"/><path d="M1.6 11.6 H8.4 V12.4 Q5 14 1.6 12.4Z" fill="#1818d8"/></g>
<g transform="translate(568.4 53)"><path d="M0.6 5 V10 Q6.6 15 12.8 10 V5 Z" fill="#7a7a7a" stroke="#222" stroke-width="0.6"/><path d="M9.6 7 V12 Q11.6 11.2 12.8 10 V5 Z" fill="#d8d418"/><path d="M0.6 5.4 V10 Q1.6 11.2 3 12 V7.4 Z" fill="#c8c410"/><ellipse cx="6.7" cy="5" rx="6.1" ry="3.4" fill="#a8a8a8" stroke="#222" stroke-width="0.7"/><ellipse cx="6.9" cy="5.2" rx="2.8" ry="1.6" fill="#444" stroke="#111" stroke-width="0.5"/><path d="M6.6 1.8 L5.4 3.8" stroke="#111" stroke-width="0.6"/></g>
<g transform="translate(585.2 53)"><path d="M3.6 2.6 V9 H11.4 V2.6" fill="none" stroke="#222" stroke-width="1.1"/><path d="M5.4 4 V9 M9.6 4 V9" stroke="#555" stroke-width="0.8"/><path d="M1.4 10 H13.6 V12 H1.4 Z" fill="#fff" stroke="#222" stroke-width="0.8"/><path d="M2.4 12.6 H11" stroke="#111" stroke-width="1"/><path d="M0.6 7 V13" stroke="#333" stroke-width="0.8"/></g>
<rect x="603.2" y="52" width="0.8" height="16" fill="#d4d4d4"/><rect x="604.0" y="52" width="0.7" height="16" fill="#fbfbfb"/>
<rect x="606.4" y="51.2" width="16.200000000000045" height="17.6" fill="#f8f8f8" stroke="#e6e6e6" stroke-width="0.5"/>
<g transform="translate(609.2 53)"><path d="M5.3 1.6 L10.4 4.5 L5.3 8 L0 5 Z" fill="#1c1cf0" stroke="#0a0a80" stroke-width="0.4"/><path d="M0 5 L5.3 8 V12.8 L0 9.6 Z" fill="#0e0ed0" stroke="#0a0a80" stroke-width="0.4"/><path d="M10.4 4.5 L5.3 8 V12.8 L10.4 9.4 Z" fill="#0808a0" stroke="#0a0a70" stroke-width="0.4"/></g>
<g transform="translate(625 53)"><path d="M0.6 8.6 L5.8 6.4 L11.8 8.6 L6.6 11 Z" fill="#3cdc3c" stroke="#0a6a0a" stroke-width="0.4"/><path d="M0.6 8.6 L6.6 11 V13.2 L0.6 10.8Z" fill="#18a018" stroke="#0a6a0a" stroke-width="0.4"/><path d="M11.8 8.6 L6.6 11 V13.2 L11.8 10.8Z" fill="#0c7c0c" stroke="#0a5a0a" stroke-width="0.4"/><path d="M3.4 4.6 L6 3.4 L9 4.6 L6.4 6Z" fill="#7cf47c" stroke="#0a6a0a" stroke-width="0.4"/><path d="M3.4 4.6 L6.4 6 V9 L3.4 7.6Z" fill="#20b820" stroke="#0a6a0a" stroke-width="0.4"/><path d="M9 4.6 L6.4 6 V9 L9 7.6Z" fill="#109010" stroke="#0a5a0a" stroke-width="0.4"/></g>
<rect x="642.0" y="52" width="0.8" height="16" fill="#d4d4d4"/><rect x="642.8" y="52" width="0.7" height="16" fill="#fbfbfb"/>
<g transform="translate(648 53)"><path d="M0 4.6 L5.2 1.6 L11 4.4 L6 7.8 Z" fill="#18c8c8"/><path d="M1.7 3.6 L5.2 1.6 L7.1 2.5 L3.7 4.6 L2 5.6 L0 4.6Z" fill="#18d0d8"/><path d="M3.7 4.7 L7.1 2.5 L8.6 3.2 L5 5.6 L4 6.7 L2 5.6Z" fill="#28c828"/><path d="M5 5.6 L8.6 3.2 L9.8 3.8 L6 6.4 L5 7.2 L4 6.7Z" fill="#f0a018"/><path d="M6 6.4 L9.8 3.8 L11 4.4 L6 7.8 L5 7.2Z" fill="#e81818"/><path d="M0 4.6 L6 7.8 V12.4 L0 9 Z" fill="#1010d0"/><path d="M11 4.4 L6 7.8 V12.4 L11 8.8 Z" fill="#0808a0"/><path d="M11 4.4 L6 7.8 V9.6 L11 6.2 Z" fill="#d01818"/><path d="M0 4.6 L5.2 1.6 L11 4.4 V8.8 L6 12.4 L0 9 Z" fill="none" stroke="#0a0a60" stroke-width="0.4"/></g>
<g transform="translate(664 53)"><path d="M5.4 1.6 H8.4 V0.6 H10.4 V1.6 H12.6 V12 H5.4 Z" fill="#e4e4e4" stroke="#a8a8a8" stroke-width="0.6"/><path d="M7 3.2 H8.6 M10 3.2 H11.4 M8.6 5.4 V7 M8.6 8.6 V10.2 M10.6 6 V7.4" stroke="#555" stroke-width="0.7"/><g transform="translate(0 6.6) scale(1.28 1.28)"><path d="M0 1.4 L2.6 0 L5.4 1.4 L2.8 2.8 Z" fill="#28e0e8"/><path d="M0 1.4 L2.8 2.8 V6.4 L0 5 Z" fill="#1818d8"/><path d="M5.4 1.4 L2.8 2.8 V6.4 L5.4 5 Z" fill="#e81818"/></g></g>
</svg>

<!-- left panel -->
<div class="abs" id="panelbg"></div>
<div class="abs" id="tree"></div>
<svg class="abs" style="left:0;top:0" width="683" height="473" viewBox="0 0 683 473">
<rect x="4" y="73" width="178" height="0.8" fill="#c8c8c8"/><rect x="4" y="73.8" width="178" height="0.6" fill="#fff"/>
<rect x="4" y="75.2" width="178" height="0.8" fill="#c8c8c8"/><rect x="4" y="76" width="178" height="0.6" fill="#fff"/>
<path d="M183.6 72.4 L186.4 75.4 M186.4 72.4 L183.6 75.4" stroke="#222" stroke-width="0.9"/>
<rect x="187.4" y="71" width="0.9" height="381" fill="#a8a8a8"/>
<rect x="188.4" y="71" width="0.8" height="381" fill="#fdfdfd"/>
<rect x="6" y="80.4" width="6.4" height="6" fill="#1c1c1c"/><rect x="6" y="80" width="6.4" height="1" fill="#2020e0"/><rect x="7.4" y="82.4" width="3.6" height="2.8" fill="none" stroke="#e8e8e8" stroke-width="0.6"/><path d="M7.4 83.8 H11" stroke="#e8e8e8" stroke-width="0.5"/>
<path d="M9.5 87 V93.2 M11.5 93.2 H15 M18.5 97 V140.6 M20.5 103 H24 M20.5 122 H24 M20.5 140.6 H24 M27.6 106.4 V112.8 H32 M27.6 125.6 V131.4 H32 M27.6 144 V160.2 H32 M27.6 150.8 H32" fill="none" stroke="#b4b4b4" stroke-width="0.6" stroke-dasharray="0.7 0.7"/>
<rect x="7.5" y="91.2" width="4" height="4" fill="#fff" stroke="#8a8a8a" stroke-width="0.7"/><path d="M8.3 93.2 H10.7" stroke="#555" stroke-width="0.6"/>
<path d="M18.6 90 V93.6 L15.6 96.2 M18.6 93.6 L21.4 96" fill="none" stroke="#000" stroke-width="1.35"/>
<rect x="24" y="88.8" width="12.4" height="8.2" fill="#0a6cd6"/>
<rect x="16.5" y="101" width="4" height="4" fill="#fff" stroke="#8a8a8a" stroke-width="0.7"/><path d="M17.3 103 H19.7" stroke="#555" stroke-width="0.6"/>
<rect x="16.5" y="120" width="4" height="4" fill="#fff" stroke="#8a8a8a" stroke-width="0.7"/><path d="M17.3 122 H19.7" stroke="#555" stroke-width="0.6"/>
<rect x="16.5" y="138.6" width="4" height="4" fill="#fff" stroke="#8a8a8a" stroke-width="0.7"/><path d="M17.3 140.6 H19.7" stroke="#555" stroke-width="0.6"/>
<path d="M24.8 101 H30.200000000000003 V104.2 Q30.0 105.6 28.6 105.6 H27.2 L25.6 103.8 Z" fill="#fff" stroke="#1c1ce8" stroke-width="1.05" stroke-linejoin="round"/><rect x="24.1" y="100.2" width="2.6" height="1.7" fill="#1c1c1c"/>
<path d="M24.8 120 H30.200000000000003 V123.2 Q30.0 124.6 28.6 124.6 H27.2 L25.6 122.8 Z" fill="#fff" stroke="#1c1ce8" stroke-width="1.05" stroke-linejoin="round"/><rect x="24.1" y="119.2" width="2.6" height="1.7" fill="#1c1c1c"/>
<path d="M25 143.2 V138.4 L28.8 143.2 V138.4" fill="none" stroke="#1c1ce8" stroke-width="1.05"/><path d="M25.2 138.8 L28.6 142.8" stroke="#e81818" stroke-width="0.8"/><circle cx="25" cy="138.3" r="0.8" fill="#1c1ce8"/><circle cx="28.8" cy="143.3" r="0.8" fill="#1c1ce8"/>
<path d="M32.6 110.39999999999999 H36 M33 111.8 H36 V115.39999999999999 H33 Z" fill="none" stroke="#333" stroke-width="0.6"/><rect x="32.4" y="109.6" width="1.6" height="0.9" fill="#e81818"/>
<path d="M32.6 129.0 H36 M33 130.4 H36 V134.0 H33 Z" fill="none" stroke="#333" stroke-width="0.6"/><rect x="32.4" y="128.20000000000002" width="1.6" height="0.9" fill="#e81818"/>
<path d="M35.6 148.20000000000002 L33.4 150.8 V153.20000000000002 H36" fill="none" stroke="#333" stroke-width="0.7"/>
<path d="M35.6 157.6 L33.4 160.2 V162.6 H36" fill="none" stroke="#333" stroke-width="0.7"/>
<rect x="2" y="439.7" width="186" height="12.3" fill="#f0f0f0"/>
<path d="M9.6 438.6 V448.6 Q9.6 449.6 10.8 449.6 H35 Q36 449.6 36 448.6 V438.6" fill="#f0f0f0" stroke="#6e6e6e" stroke-width="0.8"/>
<path d="M37.4 439.6 V447.6 Q37.4 448.6 38.4 448.6 H61.8 Q62.8 448.6 62.8 447.6 V439.6" fill="#f0f0f0" stroke="#8a8a8a" stroke-width="0.7"/>
<path d="M38.0 439.6 V447.8" stroke="#fff" stroke-width="0.6"/>
<path d="M64.6 439.6 V447.6 Q64.6 448.6 65.6 448.6 H89.6 Q90.6 448.6 90.6 447.6 V439.6" fill="#f0f0f0" stroke="#8a8a8a" stroke-width="0.7"/>
<path d="M65.19999999999999 439.6 V447.8" stroke="#fff" stroke-width="0.6"/>
<path d="M92 439.6 V447.6 Q92 448.6 93 448.6 H116.6 Q117.6 448.6 117.6 447.6 V439.6" fill="#f0f0f0" stroke="#8a8a8a" stroke-width="0.7"/>
<path d="M92.6 439.6 V447.8" stroke="#fff" stroke-width="0.6"/>
<path d="M119 439.6 V447.6 Q119 448.6 120 448.6 H143 Q144 448.6 144 447.6 V439.6" fill="#f0f0f0" stroke="#8a8a8a" stroke-width="0.7"/>
<path d="M119.6 439.6 V447.8" stroke="#fff" stroke-width="0.6"/>
<path d="M145.6 439.6 V447.6 Q145.6 448.6 146.6 448.6 H172.4 Q173.4 448.6 173.4 447.6 V439.6" fill="#f0f0f0" stroke="#8a8a8a" stroke-width="0.7"/>
<path d="M146.2 439.6 V447.8" stroke="#fff" stroke-width="0.6"/>
<g transform="translate(0 0.8)">
<rect x="11.6" y="440.6" width="6.4" height="6" fill="#1c1c1c"/><rect x="11.6" y="440.2" width="6.4" height="1" fill="#2020e0"/><rect x="13" y="442.6" width="3.6" height="2.8" fill="none" stroke="#e8e8e8" stroke-width="0.6"/>
<path d="M41.6 440.4 V447.2" stroke="#333" stroke-width="1.2"/><path d="M39.4 440.6 H43.8" stroke="#2020e0" stroke-width="1"/><path d="M40 444 L41.6 446.8 L43.2 444" fill="none" stroke="#777" stroke-width="0.6"/>
<path d="M67.6 441 H72.8 V446.4 H67.6 Z" fill="#8a8a8a"/><path d="M68 440.4 H72.6" stroke="#2020e0" stroke-width="1"/><path d="M69 445.6 L72.4 442.6" stroke="#1c1ce8" stroke-width="0.9"/>
<rect x="121" y="441.4" width="5" height="4.4" fill="none" stroke="#18a018" stroke-width="0.8" stroke-dasharray="1.6 1"/><path d="M121 441.4 H123 M124.4 445.8 H126" stroke="#e81818" stroke-width="0.9"/>
<path d="M149 442.6 L152 441 L154.6 442.6 L151.8 444.4 Z" fill="#f0c018"/><path d="M149 442.6 L151.8 444.4 V447 L149 445.2 Z" fill="#e81818"/><path d="M154.6 442.6 L151.8 444.4 V447 L154.6 445.2 Z" fill="#18a018"/><path d="M150 441 L151.4 439.6" stroke="#888" stroke-width="0.6"/>
</g>
</svg>
<div class="t" style="left:15.4px;top:80.2px;font-size:6.4px;color:#3a3a3a">特徵</div>
<div class="t" style="left:24.6px;top:89.8px;font-size:6.9px;color:#fff;letter-spacing:-0.2px">XYZ</div>
<div class="t" style="left:34.6px;top:100px;font-size:6.4px;color:#d08a18">1</div>
<div class="t" style="left:33.2px;top:119px;font-size:6.4px;color:#333">Z</div>
<div class="t" style="left:34.6px;top:137.6px;font-size:6.4px;color:#d08a18">1</div>
<div class="t" style="left:19px;top:442.0px;font-size:6.7px;color:#222;font-weight:bold;color:#000;">特徵</div>
<div class="t" style="left:46.4px;top:441.9px;font-size:6.7px;color:#222;">工具</div>
<div class="t" style="left:74px;top:441.9px;font-size:6.7px;color:#222;">加工</div>
<div class="t" style="left:101.6px;top:441.9px;font-size:6.7px;color:#222;">註解</div>
<div class="t" style="left:129.0px;top:441.9px;font-size:6.7px;color:#222;">測量</div>
<div class="t" style="left:156.2px;top:441.9px;font-size:6.7px;color:#222;">實體</div>

<!-- viewport -->
<svg class="abs" style="left:0;top:0" width="683" height="473" viewBox="0 0 683 473">
<defs>
<clipPath id="vp"><rect x="193" y="71" width="488" height="381"/></clipPath>
<linearGradient id="side" gradientUnits="userSpaceOnUse" x1="275.7" y1="0" x2="605.7" y2="0">
<stop offset="0" stop-color="#444444"/>
<stop offset="0.015" stop-color="#585858"/>
<stop offset="0.05" stop-color="#6e6e6e"/>
<stop offset="0.11" stop-color="#7e7e7e"/>
<stop offset="0.2" stop-color="#8b8b8b"/>
<stop offset="0.3" stop-color="#939393"/>
<stop offset="0.4" stop-color="#929292"/>
<stop offset="0.5" stop-color="#898989"/>
<stop offset="0.6" stop-color="#787878"/>
<stop offset="0.7" stop-color="#606060"/>
<stop offset="0.8" stop-color="#444444"/>
<stop offset="0.88" stop-color="#2e2e2e"/>
<stop offset="0.94" stop-color="#1c1c1c"/>
<stop offset="1" stop-color="#0c0c0c"/>
</linearGradient>
<linearGradient id="hw" x1="0" y1="0" x2="1" y2="0"><stop offset="0" stop-color="#1c1c1c"/><stop offset="0.08" stop-color="#2e2e2e"/><stop offset="0.3" stop-color="#5c5c5c"/><stop offset="0.5" stop-color="#808080"/><stop offset="0.7" stop-color="#929292"/><stop offset="0.87" stop-color="#8a8a8a"/><stop offset="1" stop-color="#686868"/></linearGradient>
<linearGradient id="hv" x1="0" y1="0" x2="0" y2="1"><stop offset="0" stop-color="#000" stop-opacity="0"/><stop offset="0.6" stop-color="#000" stop-opacity="0.02"/><stop offset="1" stop-color="#000" stop-opacity="0.3"/></linearGradient>
<linearGradient id="cham" x1="0" y1="0" x2="1" y2="0"><stop offset="0" stop-color="#5c5c5c"/><stop offset="0.07" stop-color="#8c8c8c"/><stop offset="0.2" stop-color="#c4c4c4"/><stop offset="0.4" stop-color="#eeeeee"/><stop offset="0.62" stop-color="#f6f6f6"/><stop offset="0.8" stop-color="#dedede"/><stop offset="0.93" stop-color="#b8b8b8"/><stop offset="1" stop-color="#8c8c8c"/></linearGradient>
</defs>
<g clip-path="url(#vp)">
<rect x="193" y="71" width="488" height="381" fill="#fff"/>
<path d="M275.7 227.9 L275.7 292.8 A165.0 95.8 0 0 0 605.7 292.8 L605.7 227.9 Z" fill="url(#side)" stroke="#4a4a4a" stroke-width="0.5"/>
<ellipse cx="440.7" cy="227.9" rx="165.0" ry="95.8" fill="#a3a3a3" stroke="#3a3a3a" stroke-width="0.7"/>
<ellipse cx="382.48" cy="260.8" rx="25.2" ry="15" fill="url(#cham)" stroke="#3a3a3a" stroke-width="0.7"/>
<ellipse cx="382.18" cy="263.8" rx="20.6" ry="11.7" fill="url(#hw)" stroke="#2c2c2c" stroke-width="0.7"/>
<ellipse cx="382.18" cy="263.8" rx="20.6" ry="11.7" fill="url(#hv)"/>
<ellipse cx="498.52" cy="193.8" rx="25.2" ry="15" fill="url(#cham)" stroke="#3a3a3a" stroke-width="0.7"/>
<ellipse cx="498.22" cy="196.8" rx="20.6" ry="11.7" fill="url(#hw)" stroke="#2c2c2c" stroke-width="0.7"/>
<ellipse cx="498.22" cy="196.8" rx="20.6" ry="11.7" fill="url(#hv)"/>
<clipPath id="sl"><path d="M411.39 163.47 L412.57 162.84 L413.83 162.27 L415.17 161.75 L416.57 161.3 L418.02 160.91 L419.53 160.6 L421.07 160.35 L422.64 160.17 L424.23 160.06 L425.83 160.03 L427.44 160.06 L429.03 160.18 L430.6 160.36 L432.14 160.62 L433.64 160.94 L435.09 161.33 L436.49 161.79 L437.81 162.31 L439.07 162.89 L440.24 163.52 L441.33 164.2 L442.32 164.94 L443.2 165.71 L443.98 166.52 L444.65 167.37 L445.2 168.24 L445.63 169.14 L445.94 170.05 L446.12 170.97 L446.18 171.9 L446.11 172.83 L445.92 173.76 L445.6 174.67 L445.16 175.56 L444.6 176.43 L443.93 177.28 L443.14 178.09 L442.25 178.86 L441.25 179.59 L440.16 180.27 L353.56 230.27 L352.38 230.9 L351.12 231.47 L349.79 231.99 L348.39 232.44 L346.93 232.83 L345.42 233.14 L343.88 233.39 L342.31 233.57 L340.72 233.68 L339.12 233.71 L337.52 233.68 L335.93 233.56 L334.36 233.38 L332.82 233.12 L331.32 232.8 L329.86 232.41 L328.47 231.95 L327.14 231.43 L325.88 230.85 L324.71 230.22 L323.63 229.54 L322.64 228.8 L321.75 228.03 L320.97 227.22 L320.31 226.37 L319.76 225.5 L319.33 224.6 L319.02 223.69 L318.83 222.77 L318.78 221.84 L318.84 220.91 L319.04 219.98 L319.35 219.07 L319.79 218.18 L320.35 217.31 L321.02 216.46 L321.81 215.65 L322.7 214.88 L323.7 214.15 L324.79 213.47 Z"/></clipPath>
<linearGradient id="slw" gradientUnits="userSpaceOnUse" x1="318.78" y1="0" x2="446.18" y2="0"><stop offset="0" stop-color="#141414"/><stop offset="0.0576" stop-color="#4c4c4c"/><stop offset="0.0576" stop-color="#383838"/><stop offset="0.7229" stop-color="#383838"/><stop offset="0.7229" stop-color="#4a4a4a"/><stop offset="0.7928" stop-color="#686868"/><stop offset="0.8713" stop-color="#828282"/><stop offset="0.9341" stop-color="#989898"/><stop offset="0.9733" stop-color="#a2a2a2"/><stop offset="1" stop-color="#8c8c8c"/></linearGradient>
<linearGradient id="slc" gradientUnits="userSpaceOnUse" x1="314.18" y1="0" x2="450.78" y2="0"><stop offset="0" stop-color="#8a8a8a"/><stop offset="0.05" stop-color="#c8c8c8"/><stop offset="0.12" stop-color="#ababab"/><stop offset="0.68" stop-color="#a9a9a9"/><stop offset="0.78" stop-color="#d8d8d8"/><stop offset="0.88" stop-color="#f4f4f4"/><stop offset="0.95" stop-color="#d0d0d0"/><stop offset="1" stop-color="#8c8c8c"/></linearGradient>
<path d="M408.15 158.51 L409.59 157.74 L411.14 157.03 L412.78 156.4 L414.49 155.85 L416.28 155.37 L418.12 154.98 L420.01 154.68 L421.94 154.46 L423.89 154.33 L425.85 154.28 L427.81 154.33 L429.76 154.47 L431.68 154.7 L433.57 155.01 L435.41 155.41 L437.19 155.89 L438.9 156.45 L440.53 157.08 L442.07 157.79 L443.5 158.57 L444.83 159.4 L446.04 160.3 L447.13 161.25 L448.08 162.25 L448.9 163.28 L449.58 164.35 L450.1 165.45 L450.48 166.57 L450.71 167.7 L450.78 168.84 L450.69 169.98 L450.46 171.11 L450.07 172.23 L449.53 173.32 L448.85 174.39 L448.02 175.43 L447.06 176.42 L445.96 177.36 L444.74 178.26 L443.41 179.09 L356.8 229.09 L355.36 229.86 L353.81 230.57 L352.18 231.2 L350.46 231.75 L348.68 232.23 L346.83 232.62 L344.94 232.92 L343.02 233.14 L341.07 233.27 L339.1 233.32 L337.14 233.27 L335.19 233.13 L333.27 232.9 L331.38 232.59 L329.54 232.19 L327.76 231.71 L326.05 231.15 L324.42 230.52 L322.89 229.81 L321.45 229.03 L320.12 228.2 L318.91 227.3 L317.82 226.35 L316.87 225.35 L316.05 224.32 L315.38 223.25 L314.85 222.15 L314.47 221.03 L314.25 219.9 L314.18 218.76 L314.26 217.62 L314.49 216.49 L314.88 215.37 L315.42 214.28 L316.11 213.21 L316.93 212.17 L317.9 211.18 L318.99 210.24 L320.21 209.34 L321.55 208.51 Z" fill="url(#slc)" stroke="#3a3a3a" stroke-width="0.7"/>
<path d="M411.39 163.47 L412.57 162.84 L413.83 162.27 L415.17 161.75 L416.57 161.3 L418.02 160.91 L419.53 160.6 L421.07 160.35 L422.64 160.17 L424.23 160.06 L425.83 160.03 L427.44 160.06 L429.03 160.18 L430.6 160.36 L432.14 160.62 L433.64 160.94 L435.09 161.33 L436.49 161.79 L437.81 162.31 L439.07 162.89 L440.24 163.52 L441.33 164.2 L442.32 164.94 L443.2 165.71 L443.98 166.52 L444.65 167.37 L445.2 168.24 L445.63 169.14 L445.94 170.05 L446.12 170.97 L446.18 171.9 L446.11 172.83 L445.92 173.76 L445.6 174.67 L445.16 175.56 L444.6 176.43 L443.93 177.28 L443.14 178.09 L442.25 178.86 L441.25 179.59 L440.16 180.27 L353.56 230.27 L352.38 230.9 L351.12 231.47 L349.79 231.99 L348.39 232.44 L346.93 232.83 L345.42 233.14 L343.88 233.39 L342.31 233.57 L340.72 233.68 L339.12 233.71 L337.52 233.68 L335.93 233.56 L334.36 233.38 L332.82 233.12 L331.32 232.8 L329.86 232.41 L328.47 231.95 L327.14 231.43 L325.88 230.85 L324.71 230.22 L323.63 229.54 L322.64 228.8 L321.75 228.03 L320.97 227.22 L320.31 226.37 L319.76 225.5 L319.33 224.6 L319.02 223.69 L318.83 222.77 L318.78 221.84 L318.84 220.91 L319.04 219.98 L319.35 219.07 L319.79 218.18 L320.35 217.31 L321.02 216.46 L321.81 215.65 L322.7 214.88 L323.7 214.15 L324.79 213.47 Z" fill="url(#slw)" stroke="#303030" stroke-width="0.6"/>
<g clip-path="url(#sl)"><path d="M411.82 189.72 L412.96 189.11 L414.18 188.55 L415.48 188.05 L416.84 187.61 L418.25 187.24 L419.71 186.93 L421.21 186.68 L422.74 186.51 L424.28 186.41 L425.83 186.37 L427.39 186.41 L428.93 186.52 L430.45 186.7 L431.95 186.95 L433.41 187.26 L434.82 187.64 L436.17 188.08 L437.46 188.59 L438.68 189.15 L439.82 189.76 L440.87 190.43 L441.83 191.14 L442.69 191.89 L443.44 192.68 L444.09 193.5 L444.63 194.35 L445.04 195.22 L445.34 196.1 L445.52 197 L445.58 197.9 L445.51 198.8 L445.33 199.7 L445.02 200.59 L444.59 201.45 L444.05 202.3 L443.39 203.12 L442.63 203.9 L441.76 204.65 L440.8 205.36 L439.74 206.02 L353.14 256.02 L351.99 256.63 L350.77 257.19 L349.47 257.69 L348.11 258.13 L346.7 258.5 L345.24 258.81 L343.74 259.06 L342.22 259.23 L340.67 259.33 L339.12 259.37 L337.57 259.33 L336.02 259.22 L334.5 259.04 L333 258.79 L331.55 258.48 L330.14 258.1 L328.78 257.66 L327.49 257.15 L326.27 256.59 L325.14 255.98 L324.08 255.31 L323.12 254.6 L322.26 253.85 L321.51 253.06 L320.86 252.24 L320.33 251.39 L319.91 250.52 L319.61 249.64 L319.43 248.74 L319.38 247.84 L319.44 246.94 L319.63 246.04 L319.94 245.15 L320.36 244.29 L320.9 243.44 L321.56 242.62 L322.32 241.84 L323.19 241.09 L324.16 240.38 L325.21 239.72 Z" fill="#b6b6b6" stroke="#444" stroke-width="0.6"/><path d="M411.82 191.62 L412.96 191.01 L414.18 190.45 L415.48 189.95 L416.84 189.51 L418.25 189.14 L419.71 188.83 L421.21 188.58 L422.74 188.41 L424.28 188.31 L425.83 188.27 L427.39 188.31 L428.93 188.42 L430.45 188.6 L431.95 188.85 L433.41 189.16 L434.82 189.54 L436.17 189.98 L437.46 190.49 L438.68 191.05 L439.82 191.66 L440.87 192.33 L441.83 193.04 L442.69 193.79 L443.44 194.58 L444.09 195.4 L444.63 196.25 L445.04 197.12 L445.34 198 L445.52 198.9 L445.58 199.8 L445.51 200.7 L445.33 201.6 L445.02 202.49 L444.59 203.35 L444.05 204.2 L443.39 205.02 L442.63 205.8 L441.76 206.55 L440.8 207.26 L439.74 207.92 L353.14 257.92 L351.99 258.53 L350.77 259.09 L349.47 259.59 L348.11 260.03 L346.7 260.4 L345.24 260.71 L343.74 260.96 L342.22 261.13 L340.67 261.23 L339.12 261.27 L337.57 261.23 L336.02 261.12 L334.5 260.94 L333 260.69 L331.55 260.38 L330.14 260 L328.78 259.56 L327.49 259.05 L326.27 258.49 L325.14 257.88 L324.08 257.21 L323.12 256.5 L322.26 255.75 L321.51 254.96 L320.86 254.14 L320.33 253.29 L319.91 252.42 L319.61 251.54 L319.43 250.64 L319.38 249.74 L319.44 248.84 L319.63 247.94 L319.94 247.05 L320.36 246.19 L320.9 245.34 L321.56 244.52 L322.32 243.74 L323.19 242.99 L324.16 242.28 L325.21 241.62 Z" fill="#b0b0b0" stroke="#555" stroke-width="0.5"/><path d="M411.82 193.52 L412.96 192.91 L414.18 192.35 L415.48 191.85 L416.84 191.41 L418.25 191.04 L419.71 190.73 L421.21 190.48 L422.74 190.31 L424.28 190.21 L425.83 190.17 L427.39 190.21 L428.93 190.32 L430.45 190.5 L431.95 190.75 L433.41 191.06 L434.82 191.44 L436.17 191.88 L437.46 192.39 L438.68 192.95 L439.82 193.56 L440.87 194.23 L441.83 194.94 L442.69 195.69 L443.44 196.48 L444.09 197.3 L444.63 198.15 L445.04 199.02 L445.34 199.9 L445.52 200.8 L445.58 201.7 L445.51 202.6 L445.33 203.5 L445.02 204.39 L444.59 205.25 L444.05 206.1 L443.39 206.92 L442.63 207.7 L441.76 208.45 L440.8 209.16 L439.74 209.82 L353.14 259.82 L351.99 260.43 L350.77 260.99 L349.47 261.49 L348.11 261.93 L346.7 262.3 L345.24 262.61 L343.74 262.86 L342.22 263.03 L340.67 263.13 L339.12 263.17 L337.57 263.13 L336.02 263.02 L334.5 262.84 L333 262.59 L331.55 262.28 L330.14 261.9 L328.78 261.46 L327.49 260.95 L326.27 260.39 L325.14 259.78 L324.08 259.11 L323.12 258.4 L322.26 257.65 L321.51 256.86 L320.86 256.04 L320.33 255.19 L319.91 254.32 L319.61 253.44 L319.43 252.54 L319.38 251.64 L319.44 250.74 L319.63 249.84 L319.94 248.95 L320.36 248.09 L320.9 247.24 L321.56 246.42 L322.32 245.64 L323.19 244.89 L324.16 244.18 L325.21 243.52 Z" fill="#b8b8b8" stroke="#555" stroke-width="0.5"/>
<line x1="326.12" y1="198.8" x2="327.62" y2="238.8" stroke="#262626" stroke-width="0.6"/>
<line x1="410.88" y1="148.8" x2="410.88" y2="198.8" stroke="#1a1a1a" stroke-width="0.7"/>
</g>
<line x1="193" y1="84.41" x2="681" y2="366.15" stroke="#ffff00" stroke-width="1.1" stroke-opacity="0.6"/>
<line x1="193" y1="370.19" x2="681" y2="88.45" stroke="#ffff00" stroke-width="1.1" stroke-opacity="0.6"/>
<line x1="440.5" y1="71" x2="440.5" y2="227.3" stroke="#ffff00" stroke-width="1.1" stroke-opacity="0.6"/>
<line x1="440.5" y1="388.6" x2="440.5" y2="452" stroke="#ffff00" stroke-width="1.1" stroke-opacity="0.6"/>
<line x1="440.5" y1="227.3" x2="420.5" y2="215.75" stroke="#f6f000" stroke-width="2"/>
<path d="M416.5 213.44 L421.6 213.85 L419.4 217.66 Z" fill="#f6f000"/>
<line x1="440.5" y1="227.3" x2="460.5" y2="215.75" stroke="#f6f000" stroke-width="2"/>
<path d="M464.5 213.44 L461.6 217.66 L459.4 213.85 Z" fill="#f6f000"/>
<ellipse cx="440.5" cy="227.6" rx="3.6" ry="2.6" fill="#fff36a" stroke="#ece400" stroke-width="1.1"/>
</g>
<path d="M192.5 452 L192.5 70.5 L681 70.5" fill="none" stroke="#9a9a9a" stroke-width="1"/>
</svg>

<!-- context menu -->
<div class="abs" id="ctx">
 <div class="abs" style="left:0.2px;top:10.4px;width:105.6px;height:10px;background:#91c9f7"></div>
 <div class="cm" style="top:2.2px">新工作座標...</div>
 <div class="cm" style="top:12.4px">編輯工作座標...</div>
 <div class="cm" style="top:22.6px">啟用工作座標</div>
 <div class="sep" style="top:32.6px"></div>
 <div class="cm" style="top:36.2px">重新命名</div>
 <div class="sep" style="top:45.8px"></div>
 <div class="cm" style="top:49.8px">剪下</div><div class="sc" style="top:49.2px">Ctrl+X</div>
 <div class="cm" style="top:60.4px">複製</div><div class="sc" style="top:59.8px">Ctrl+C</div>
 <div class="cm d" style="top:70.8px">貼上</div><div class="sc d" style="top:70.2px">Ctrl+V</div>
 <div class="cm d" style="top:81.0px">連結到工作座標</div>
 <div class="sep" style="top:90.6px"></div>
 <div class="cm" style="top:93.8px">刪除</div><div class="sc" style="top:93.2px">Del</div>
 <div class="cm" style="top:104.4px">全選</div>
 <div class="cm" style="top:114.8px">對調選擇</div>
 <div class="sep" style="top:124.6px"></div>
 <div class="cm" style="top:127.8px">檔案</div><div class="sc" style="top:127.2px;left:98.4px;font-size:6.5px">&gt;</div>
 <div class="cm" style="top:138.2px">加工</div><div class="sc" style="top:137.6px;left:98.4px;font-size:6.5px">&gt;</div>
</div>

<!-- annotation -->
<svg class="abs" style="left:0;top:0" width="683" height="473" viewBox="0 0 683 473">
<rect x="19.4" y="86.3" width="21.6" height="13.3" fill="none" stroke="#ee1620" stroke-width="2"/>
<path d="M41.6 91.6 L68 82.6" stroke="#ee1620" stroke-width="1.8"/>
</svg>
<div class="t note" style="left:70.2px">右鍵點選</div>
<div class="t note" style="left:151.2px;transform-origin:0 0;transform:scaleX(0.95)">XYZ</div>
<div class="t note" style="left:188.4px">即可編輯座標系</div>

<!-- status bar -->
<div class="abs" id="status"></div>
<div class="abs" style="left:2px;top:461.5px;width:679px;height:0;border-top:1px solid #e8e8e8"></div>
<div class="st" style="top:454.2px">選擇下一個工作</div>
<div class="st" style="top:464.2px">需要說明, 按F1</div>
</div>
</body>
</html>
